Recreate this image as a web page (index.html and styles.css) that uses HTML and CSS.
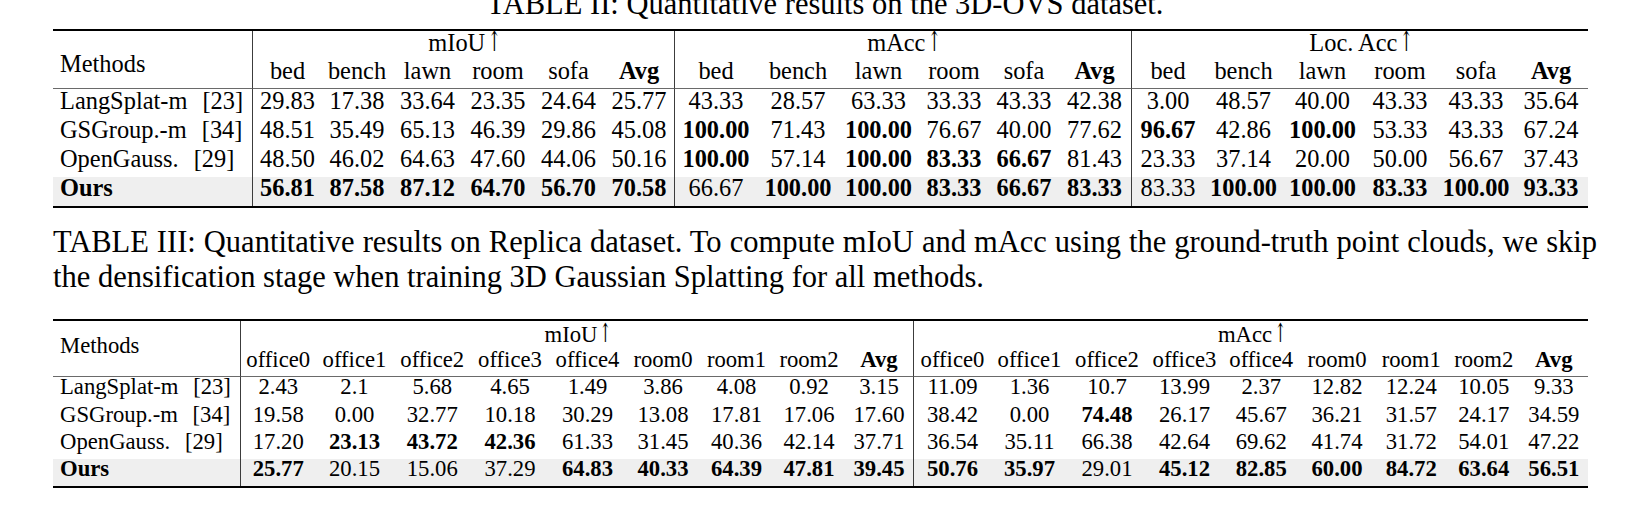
FILE: index.html
```html
<!DOCTYPE html>
<html lang="en">
<head>
<meta charset="utf-8">
<title>Quantitative results</title>
<link rel="stylesheet" href="styles.css">
</head>
<body>
<div class="page">
  <p class="caption title">TABLE II: Quantitative results on the 3D-OVS dataset.</p>
  <table class="res t1">
    <colgroup>
      <col><col><col><col><col><col><col><col><col><col><col><col><col><col><col><col><col><col><col>
    </colgroup>
    <thead>
      <tr class="grp">
        <th class="meth" rowspan="2">Methods</th>
        <th class="vl" colspan="6">mIoU<span class="arr">↑</span></th>
        <th class="vl" colspan="6">mAcc<span class="arr">↑</span></th>
        <th class="vl" colspan="6">Loc. Acc<span class="arr">↑</span></th>
      </tr>
      <tr class="sub">
        <th class="vl">bed</th><th>bench</th><th>lawn</th><th>room</th><th>sofa</th><th class="b">Avg</th>
        <th class="vl">bed</th><th>bench</th><th>lawn</th><th>room</th><th>sofa</th><th class="b">Avg</th>
        <th class="vl">bed</th><th>bench</th><th>lawn</th><th>room</th><th>sofa</th><th class="b">Avg</th>
      </tr>
    </thead>
    <tbody>
      <tr class="row">
        <td class="name">LangSplat-m [23]</td>
        <td class="vl">29.83</td><td>17.38</td><td>33.64</td><td>23.35</td><td>24.64</td><td>25.77</td>
        <td class="vl">43.33</td><td>28.57</td><td>63.33</td><td>33.33</td><td>43.33</td><td>42.38</td>
        <td class="vl">3.00</td><td>48.57</td><td>40.00</td><td>43.33</td><td>43.33</td><td>35.64</td>
      </tr>
      <tr class="row">
        <td class="name">GSGroup.-m [34]</td>
        <td class="vl">48.51</td><td>35.49</td><td>65.13</td><td>46.39</td><td>29.86</td><td>45.08</td>
        <td class="vl b">100.00</td><td>71.43</td><td class="b">100.00</td><td>76.67</td><td>40.00</td><td>77.62</td>
        <td class="vl b">96.67</td><td>42.86</td><td class="b">100.00</td><td>53.33</td><td>43.33</td><td>67.24</td>
      </tr>
      <tr class="row">
        <td class="name">OpenGauss. [29]</td>
        <td class="vl">48.50</td><td>46.02</td><td>64.63</td><td>47.60</td><td>44.06</td><td>50.16</td>
        <td class="vl b">100.00</td><td>57.14</td><td class="b">100.00</td><td class="b">83.33</td><td class="b">66.67</td><td>81.43</td>
        <td class="vl">23.33</td><td>37.14</td><td>20.00</td><td>50.00</td><td>56.67</td><td>37.43</td>
      </tr>
      <tr class="row ours">
        <td class="name b">Ours</td>
        <td class="vl b">56.81</td><td class="b">87.58</td><td class="b">87.12</td><td class="b">64.70</td><td class="b">56.70</td><td class="b">70.58</td>
        <td class="vl">66.67</td><td class="b">100.00</td><td class="b">100.00</td><td class="b">83.33</td><td class="b">66.67</td><td class="b">83.33</td>
        <td class="vl">83.33</td><td class="b">100.00</td><td class="b">100.00</td><td class="b">83.33</td><td class="b">100.00</td><td class="b">93.33</td>
      </tr>
    </tbody>
  </table>

  <p class="caption desc">TABLE III: Quantitative results on Replica dataset. To compute mIoU and mAcc using the ground-truth point clouds, we skip the densification stage when training 3D Gaussian Splatting for all methods.</p>

  <table class="res t2">
    <colgroup>
      <col><col><col><col><col><col><col><col><col><col><col><col><col><col><col><col><col><col><col>
    </colgroup>
    <thead>
      <tr class="grp">
        <th class="meth" rowspan="2">Methods</th>
        <th class="vl" colspan="9">mIoU<span class="arr">↑</span></th>
        <th class="vl" colspan="9">mAcc<span class="arr">↑</span></th>
      </tr>
      <tr class="sub">
        <th class="vl">office0</th><th>office1</th><th>office2</th><th>office3</th><th>office4</th><th>room0</th><th>room1</th><th>room2</th><th class="b">Avg</th>
        <th class="vl">office0</th><th>office1</th><th>office2</th><th>office3</th><th>office4</th><th>room0</th><th>room1</th><th>room2</th><th class="b">Avg</th>
      </tr>
    </thead>
    <tbody>
      <tr class="row">
        <td class="name">LangSplat-m [23]</td>
        <td class="vl">2.43</td><td>2.1</td><td>5.68</td><td>4.65</td><td>1.49</td><td>3.86</td><td>4.08</td><td>0.92</td><td>3.15</td>
        <td class="vl">11.09</td><td>1.36</td><td>10.7</td><td>13.99</td><td>2.37</td><td>12.82</td><td>12.24</td><td>10.05</td><td>9.33</td>
      </tr>
      <tr class="row">
        <td class="name">GSGroup.-m [34]</td>
        <td class="vl">19.58</td><td>0.00</td><td>32.77</td><td>10.18</td><td>30.29</td><td>13.08</td><td>17.81</td><td>17.06</td><td>17.60</td>
        <td class="vl">38.42</td><td>0.00</td><td class="b">74.48</td><td>26.17</td><td>45.67</td><td>36.21</td><td>31.57</td><td>24.17</td><td>34.59</td>
      </tr>
      <tr class="row">
        <td class="name">OpenGauss. [29]</td>
        <td class="vl">17.20</td><td class="b">23.13</td><td class="b">43.72</td><td class="b">42.36</td><td>61.33</td><td>31.45</td><td>40.36</td><td>42.14</td><td>37.71</td>
        <td class="vl">36.54</td><td>35.11</td><td>66.38</td><td>42.64</td><td>69.62</td><td>41.74</td><td>31.72</td><td>54.01</td><td>47.22</td>
      </tr>
      <tr class="row ours">
        <td class="name b">Ours</td>
        <td class="vl b">25.77</td><td>20.15</td><td>15.06</td><td>37.29</td><td class="b">64.83</td><td class="b">40.33</td><td class="b">64.39</td><td class="b">47.81</td><td class="b">39.45</td>
        <td class="vl b">50.76</td><td class="b">35.97</td><td>29.01</td><td class="b">45.12</td><td class="b">82.85</td><td class="b">60.00</td><td class="b">84.72</td><td class="b">63.64</td><td class="b">56.51</td>
      </tr>
    </tbody>
  </table>
</div>
</body>
</html>
```

FILE: styles.css
```css
html, body {
  margin: 0;
  padding: 0;
  background: #ffffff;
}

body {
  font-family: "Liberation Serif", "Times New Roman", serif;
  color: #000000;
  overflow: hidden;
}

.page {
  width: 1544px;
  padding-left: 53px;
}

.caption {
  margin: 0;
  font-size: 30.5px;
  line-height: 35px;
}

.title {
  margin-top: -13px;
  text-align: center;
}

.desc {
  margin-top: 17px;
  text-align: justify;
}

/* ---------- results tables ---------- */
.res {
  width: 1535px;
  table-layout: fixed;
  border-collapse: separate;
  border-spacing: 0;
  border-top: 2px solid #000;
  border-bottom: 2px solid #000;
}

.res th,
.res td {
  padding: 0;
  font-weight: normal;
  text-align: center;
  white-space: nowrap;
  vertical-align: top;
}

.res .b {
  font-weight: bold;
}

.res .vl {
  border-left: 1px solid #3c3c3c;
}

.res .meth,
.res .name {
  text-align: left;
  padding-left: 7px;
}

.res .name {
  word-spacing: 9px;
}

.res .sub th,
.res .meth {
  border-bottom: 1px solid #6a6a6a;
}

.res .ours td {
  background: #efefef;
}

/* thin, tall math-style up arrow */
.arr {
  display: inline-block;
  font-family: "DejaVu Serif", serif;
  font-weight: normal;
  margin: 0 -6px 0 -1px;
  transform: scale(0.62, 1.15);
  transform-origin: 50% 80%;
}

/* table II : 3D-OVS */
.t1 {
  margin-top: 7px;
  font-size: 24.4px;
}

.t1 col:nth-child(1) { width: 199px; }
.t1 col:nth-child(2) { width: 70px; }
.t1 col:nth-child(3) { width: 70px; }
.t1 col:nth-child(4) { width: 71px; }
.t1 col:nth-child(5) { width: 70px; }
.t1 col:nth-child(6) { width: 71px; }
.t1 col:nth-child(7) { width: 70px; }
.t1 col:nth-child(8) { width: 83px; }
.t1 col:nth-child(9) { width: 82px; }
.t1 col:nth-child(10) { width: 79px; }
.t1 col:nth-child(11) { width: 72px; }
.t1 col:nth-child(12) { width: 68px; }
.t1 col:nth-child(13) { width: 73px; }
.t1 col:nth-child(14) { width: 73px; }
.t1 col:nth-child(15) { width: 79px; }
.t1 col:nth-child(16) { width: 79px; }
.t1 col:nth-child(17) { width: 76px; }
.t1 col:nth-child(18) { width: 76px; }
.t1 col:nth-child(19) { width: 74px; }

.t1 .grp th {
  padding-top: 2px;
  padding-bottom: 6px;
  line-height: 20px;
}

.t1 .sub th {
  padding-top: 1px;
  padding-bottom: 6px;
  line-height: 22px;
}

.t1 th.meth {
  padding-top: 22px;
  padding-bottom: 0;
  line-height: 22px;
}

.t1 .row td {
  line-height: 22px;
  padding-top: 0.5px;
  padding-bottom: 6.75px;
}

/* table III : Replica */
.t2 {
  margin-top: 24px;
  font-size: 22.7px;
}

.t2 col:nth-child(1) { width: 187px; }
.t2 col:nth-child(2) { width: 75.5px; }
.t2 col:nth-child(3) { width: 78px; }
.t2 col:nth-child(4) { width: 77.5px; }
.t2 col:nth-child(5) { width: 78px; }
.t2 col:nth-child(6) { width: 77px; }
.t2 col:nth-child(7) { width: 74px; }
.t2 col:nth-child(8) { width: 73px; }
.t2 col:nth-child(9) { width: 72px; }
.t2 col:nth-child(10) { width: 68px; }
.t2 col:nth-child(11) { width: 78px; }
.t2 col:nth-child(12) { width: 77px; }
.t2 col:nth-child(13) { width: 78px; }
.t2 col:nth-child(14) { width: 77px; }
.t2 col:nth-child(15) { width: 76.5px; }
.t2 col:nth-child(16) { width: 75px; }
.t2 col:nth-child(17) { width: 73.5px; }
.t2 col:nth-child(18) { width: 71.5px; }
.t2 col:nth-child(19) { width: 68.5px; }

.t2 .grp th {
  padding-top: 3.4px;
  padding-bottom: 3.6px;
  line-height: 20px;
}

.t2 .sub th {
  padding-top: 1.4px;
  padding-bottom: 5.6px;
  line-height: 20px;
}

.t2 th.meth {
  padding-top: 15.4px;
  padding-bottom: 0;
  line-height: 20px;
}

.t2 .row td {
  padding-top: 0.4px;
  padding-bottom: 6.85px;
  line-height: 20px;
}
```
